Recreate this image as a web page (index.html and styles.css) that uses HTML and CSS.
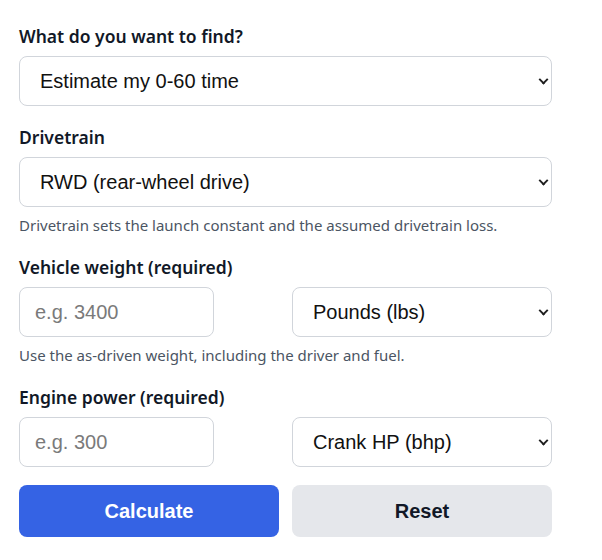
FILE: index.html
```html
<!DOCTYPE html>
<html>
<head>
  <meta charset="UTF-8">
  <title>0-60 Estimator</title>
  <link rel="stylesheet" href="styles.css">
</head>
<body>
  <form class="calc-form">
    <div class="field">
      <label for="goal">What do you want to find?</label>
      <div class="select-wrap">
        <select id="goal">
          <option selected>Estimate my 0-60 time</option>
          <option>Required power for a target time</option>
        </select>
      </div>
    </div>

    <div class="field">
      <label for="drivetrain">Drivetrain</label>
      <div class="select-wrap">
        <select id="drivetrain">
          <option>FWD (front-wheel drive)</option>
          <option selected>RWD (rear-wheel drive)</option>
          <option>AWD (all-wheel drive)</option>
        </select>
      </div>
      <p class="hint">Drivetrain sets the launch constant and the assumed drivetrain loss.</p>
    </div>

    <div class="field">
      <label for="weight">Vehicle weight (required)</label>
      <div class="pair">
        <input type="number" id="weight" placeholder="e.g. 3400">
        <div class="select-wrap">
          <select id="weightUnit">
            <option selected>Pounds (lbs)</option>
            <option>Kilograms (kg)</option>
          </select>
        </div>
      </div>
      <p class="hint">Use the as-driven weight, including the driver and fuel.</p>
    </div>

    <div class="field">
      <label for="power">Engine power (required)</label>
      <div class="pair">
        <input type="number" id="power" placeholder="e.g. 300">
        <div class="select-wrap">
          <select id="powerUnit">
            <option selected>Crank HP (bhp)</option>
            <option>Wheel HP (whp)</option>
            <option>Kilowatts (kW)</option>
          </select>
        </div>
      </div>
    </div>

    <div class="pair buttons">
      <button type="button" id="calcBtn">Calculate</button>
      <button type="reset" id="resetBtn">Reset</button>
    </div>
  </form>
</body>
</html>
```

FILE: styles.css
```css
body {
  margin: 0;
  background: #fff;
  font-family: "Noto Sans", "Open Sans", sans-serif;
  color: #111827;
}

.calc-form {
  width: 533px;
  padding: 24px 0 0 19px;
}

.field {
  margin-bottom: 19px;
}

label {
  display: block;
  font-size: 17.5px;
  font-weight: 600;
  line-height: 24px;
  margin-bottom: 8px;
}

select,
input[type="number"] {
  height: 50px;
  border: 1px solid #d1d5db;
  border-radius: 8px;
  background-color: #fff;
  font-family: "Liberation Sans", Arial, sans-serif;
  font-size: 20px;
  color: #111;
  box-sizing: border-box;
  margin: 0;
}

.select-wrap {
  position: relative;
}

.select-wrap::after {
  content: "";
  position: absolute;
  right: 5px;
  top: 50%;
  width: 5px;
  height: 5px;
  border-right: 2px solid #1f1f1f;
  border-bottom: 2px solid #1f1f1f;
  transform: translateY(-70%) rotate(45deg);
  pointer-events: none;
}

select {
  width: 100%;
  padding: 0 24px 0 20px;
  -webkit-appearance: none;
  appearance: none;
}

input[type="number"] {
  width: 195px;
  padding: 0 15px;
  -moz-appearance: textfield;
}

input::placeholder {
  color: #7a7a7a;
}

input::-webkit-outer-spin-button,
input::-webkit-inner-spin-button {
  -webkit-appearance: none;
}

.pair {
  display: grid;
  grid-template-columns: 1fr 1fr;
  gap: 13px;
}

.hint {
  margin: 7px 0 0;
  font-size: 15px;
  line-height: 22px;
  color: #4b5563;
}

.buttons {
  margin-top: -1px;
}

button {
  height: 52px;
  border: none;
  border-radius: 8px;
  font-family: "Liberation Sans", Arial, sans-serif;
  font-size: 20px;
  font-weight: bold;
  cursor: pointer;
}

#calcBtn {
  background-color: #3563e4;
  color: #fff;
}

#resetBtn {
  background-color: #e5e7eb;
  color: #111827;
}
```
